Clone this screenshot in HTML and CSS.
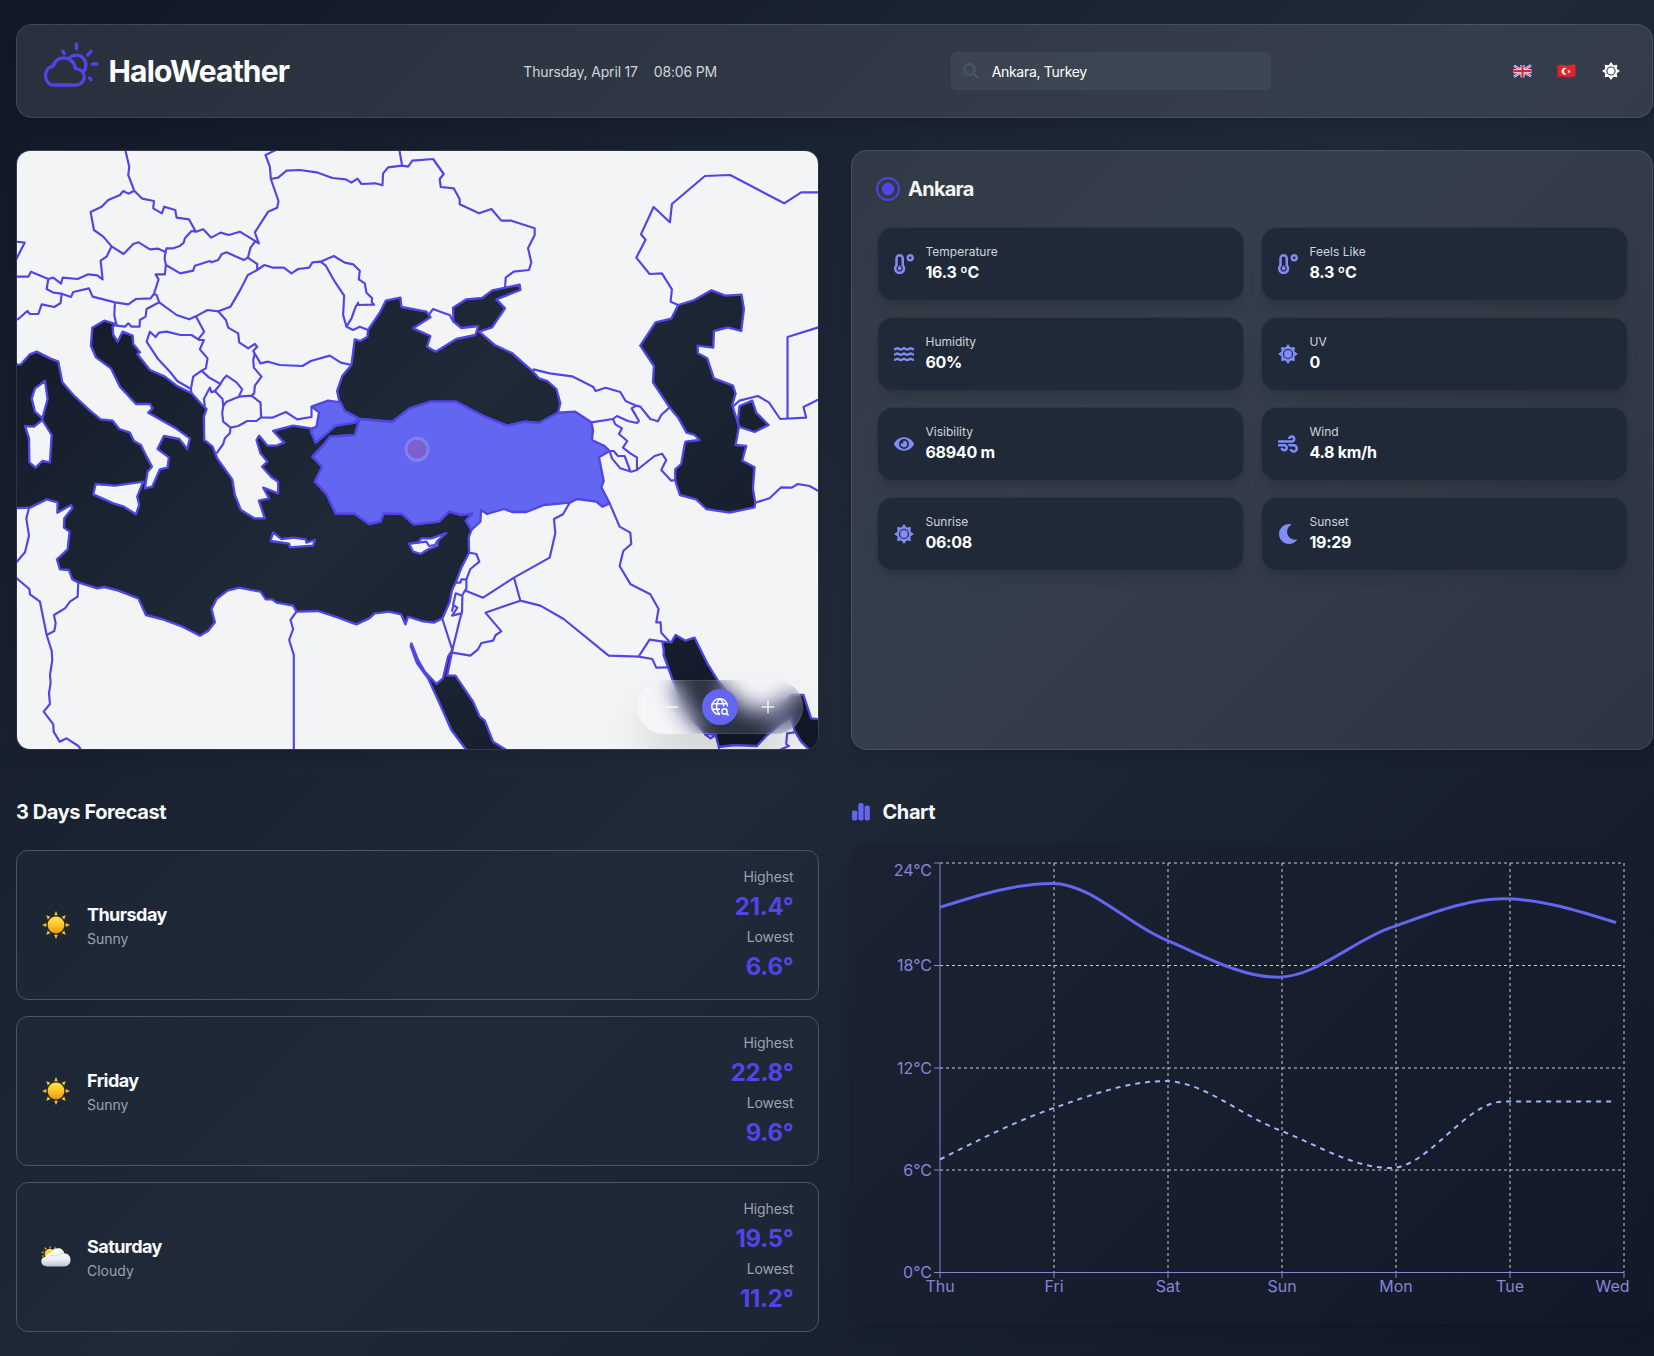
FILE: index.html
```html
<!DOCTYPE html>
<html lang="en">
<head>
<meta charset="utf-8">
<title>HaloWeather</title>
<link rel="stylesheet" href="styles.css">
</head>
<body>
<svg class="defs" width="0" height="0" aria-hidden="true">
  <symbol id="i-sun" viewBox="0 0 20 20">
    <path fill-rule="evenodd" d="M10 0L12.6 3.6L17 3L16.4 7.4L20 10L16.4 12.6L17 17L12.6 16.4L10 20L7.4 16.4L3 17L3.6 12.6L0 10L3.6 7.4L3 3L7.4 3.6ZM10 4.9a5.1 5.1 0 1 0 0 10.2a5.1 5.1 0 0 0 0-10.2Z"/>
    <circle cx="10" cy="10" r="3.9"/>
  </symbol>
  <symbol id="i-temp" viewBox="0 0 512 512">
    <path d="M416 0c-52.9 0-96 43.1-96 96s43.1 96 96 96 96-43.1 96-96-43.1-96-96-96zm0 128c-17.7 0-32-14.3-32-32s14.3-32 32-32 32 14.3 32 32-14.3 32-32 32zm-160-16C256 50.1 205.9 0 144 0S32 50.1 32 112v166.5C12.3 303.2 0 334 0 368c0 79.5 64.5 144 144 144s144-64.5 144-144c0-34-12.3-64.9-32-89.5V112zM144 448c-44.1 0-80-35.9-80-80 0-25.5 12.2-48.9 32-63.8V112c0-26.5 21.5-48 48-48s48 21.5 48 48v192.2c19.8 14.8 32 38.3 32 63.8 0 44.1-35.9 80-80 80zm16-125.1V304c0-8.8-7.2-16-16-16s-16 7.2-16 16v18.9c-18.6 6.6-32 24.2-32 45.1 0 26.5 21.5 48 48 48s48-21.5 48-48c0-20.9-13.4-38.5-32-45.1z"/>
  </symbol>
  <symbol id="i-water" viewBox="0 0 20 20">
    <g fill="none" stroke="currentColor" stroke-width="2.4">
      <path id="wave" d="M0 5.400C1.900 5.200 2.600 4.200 3.500 4.200S5 5.400 6.700 5.400S9 4.200 10 4.200S11.600 5.400 13.300 5.400S15.600 4.200 16.500 4.200S18.100 5.200 20 5.400"/>
      <use href="#wave" y="5.3"/><use href="#wave" y="10.6"/>
    </g>
  </symbol>
  <symbol id="i-eye" viewBox="0 0 576 512">
    <path d="M572.52 241.4C518.29 135.59 410.93 64 288 64S57.68 135.64 3.48 241.41a32.35 32.35 0 0 0 0 29.19C57.71 376.41 165.07 448 288 448s230.32-71.64 284.52-177.41a32.35 32.35 0 0 0 0-29.19zM288 400a144 144 0 1 1 144-144 143.93 143.93 0 0 1-144 144zm0-240a95.31 95.31 0 0 0-25.31 3.79 47.85 47.85 0 0 1-66.9 66.9A95.78 95.78 0 1 0 288 160z"/>
  </symbol>
  <symbol id="i-wind" viewBox="0 0 512 512">
    <path d="M156.7 256H16c-8.8 0-16 7.2-16 16v32c0 8.8 7.2 16 16 16h142.2c15.9 0 30.8 10.9 33.4 26.6 3.3 20-12.1 37.4-31.6 37.4-14.1 0-26.1-9.2-30.4-21.9-2.1-6.3-8.6-10.1-15.2-10.1H81.6c-9.8 0-17.7 8.8-15.9 18.4 8.6 44.1 47.6 77.6 94.2 77.6 57.1 0 102.7-50.1 95.2-108.6C249 291 205.4 256 156.7 256zM16 224h336c59.7 0 106.8-54.8 93.8-116.7-7.6-36.2-36.9-65.5-73.1-73.1-55.4-11.6-105.1 24.9-114.9 75.5-1.9 9.6 6.1 18.3 15.8 18.3h32.8c6.7 0 13.1-3.8 15.2-10.1C325.9 105.2 337.9 96 352 96c19.4 0 34.9 17.4 31.6 37.4-2.6 15.7-17.4 26.6-33.4 26.6H16c-8.8 0-16 7.2-16 16v32c0 8.8 7.2 16 16 16zm384 32H243.7c19.3 16.6 33.2 38.8 39.8 64H400c26.5 0 48 21.5 48 48s-21.5 48-48 48c-17.9 0-33.3-9.9-41.6-24.4-2.9-5-8.7-7.6-14.5-7.6h-33.8c-10.9 0-19 10.8-15.3 21.1 17.8 50.6 70.5 84.8 129.4 72.3 41.2-8.7 75.1-41.6 84.7-82.7C526 321.5 470.5 256 400 256z"/>
  </symbol>
  <symbol id="i-moon" viewBox="0 0 512 512">
    <path d="M283.211 512c78.962 0 151.079-35.925 198.857-94.792 7.068-8.708-.639-21.43-11.562-19.35-124.203 23.654-238.262-71.576-238.262-196.954 0-72.222 38.662-138.635 101.498-174.394 9.686-5.512 7.25-20.197-3.756-22.23A258.156 258.156 0 0 0 283.211 0c-141.309 0-256 114.511-256 256 0 141.309 114.511 256 256 256z"/>
  </symbol>
  <linearGradient id="gold" x1="0" y1="0" x2="0" y2="1">
    <stop offset="0" stop-color="#ffe640"/><stop offset=".45" stop-color="#fdc92a"/><stop offset="1" stop-color="#ef9412"/>
  </linearGradient>
  <linearGradient id="puff" x1="0" y1="0" x2="0" y2="1">
    <stop offset="0" stop-color="#ffffff"/><stop offset=".6" stop-color="#eef1f5"/><stop offset="1" stop-color="#b9c4d0"/>
  </linearGradient>
  <symbol id="e-sun" viewBox="0 0 28 28">
    <g fill="#f9bf2c">
      <path id="ray" d="M12.100 4.300L14 .100L15.900 4.300Z"/>
      <use href="#ray" transform="rotate(45 14 14)"/><use href="#ray" transform="rotate(90 14 14)"/>
      <use href="#ray" transform="rotate(135 14 14)"/><use href="#ray" transform="rotate(180 14 14)"/>
      <use href="#ray" transform="rotate(225 14 14)"/><use href="#ray" transform="rotate(270 14 14)"/>
      <use href="#ray" transform="rotate(315 14 14)"/>
    </g>
    <circle cx="14" cy="14" r="8.400" fill="url(#gold)"/>
  </symbol>
  <symbol id="e-cloud" viewBox="0 0 30 24">
    <g fill="#f2a51c">
      <path d="M8.2 3.3L9 .5L10 3.3ZM4 4.8L3.4 2L6 3.4ZM12.5 3.5L14.6 1.5L14.3 4.3ZM2.8 8.2L0 7.6L2.8 6.2ZM3 11.5L.8 12L2 9.6Z"/>
    </g>
    <circle cx="8.8" cy="9" r="5.2" fill="url(#gold)"/>
    <path fill="url(#puff)" d="M6.5 21.5C2.5 21.5 .3 19.3 .3 16.3C.3 13.6 2.2 12 4.6 11.8C5 9 7.2 7.6 10 8C11.4 4.6 14 3.2 17 3.2C20.4 3.2 22.8 5.3 23.2 8.2C26.8 8.2 29.5 11 29.5 14.8C29.5 18.8 26.9 21.5 23 21.5Z"/>
    <path fill="none" stroke="#c9d1da" stroke-width=".8" d="M9 11.5C11 9.8 13.5 10 15 11.5C16.5 9.5 19.5 8.2 23 8.4"/>
  </symbol>
</svg>

<div class="app">
  <header class="glass header">
    <div class="brand">
      <svg class="brand-icon" viewBox="0 0 58 46" fill="none" stroke="currentColor" stroke-width="3.3" stroke-linecap="round" stroke-linejoin="round">
        <path d="M12 43H34.5C39.5 43 43.2 39.6 43.2 34.8C43.2 30.2 39.8 27 34.4 26.6C33.6 20 28.6 15.800 22.800 15.800C17.600 15.800 13.800 19 12.200 24C7.600 24.800 4.600 28.500 4.600 33.800C4.600 39 7.600 43 12 43Z"/>
        <path d="M28.600 15.900C30.500 14 33 13.200 35.600 13.200C40.800 13.200 44.900 17.600 44.900 23.100C44.900 26 43.800 28.500 42 30.200"/>
        <path d="M35.500 2V6.800M21.800 9.200L23.300 11.700M50 9.200L46.700 13.200M51.500 22H56M48.500 36L50 37.800"/>
      </svg>
      <h1>HaloWeather</h1>
    </div>
    <div class="clock"><span>Thursday, April 17</span><span>08:06 PM</span></div>
    <div class="search">
      <svg viewBox="0 0 16 16" width="16" height="16" fill="none" stroke="currentColor" stroke-width="2.200" stroke-linecap="round"><circle cx="6.500" cy="6.500" r="5.300"/><path d="M10.600 10.600L14.800 14.800"/></svg>
      <span>Ankara, Turkey</span>
    </div>
    <div class="actions">
      <svg class="flag" viewBox="0 0 19 14">
        <path fill="#23408f" d="M.5 1.500C4-.300 8 2 11 1.300S17 .300 18.500 1V12.500C15 12 12.500 13.600 9.500 13.200S3.500 12 .5 13.200Z"/>
        <path stroke="#f1f1f4" stroke-width="2.400" d="M1 1.800L18 12.300M18 1.300L1 12.800"/>
        <path stroke="#d5283a" stroke-width=".900" d="M1 1.800L18 12.300M18 1.300L1 12.800"/>
        <path stroke="#f1f1f4" stroke-width="4" d="M9.500 1V13.200M.5 7.200H18.500"/>
        <path stroke="#d5283a" stroke-width="2.200" d="M9.500 1V13.200M.5 7.200H18.500"/>
      </svg>
      <svg class="flag" viewBox="0 0 19 14">
        <path fill="#e3222f" d="M.5 1.500C4-.300 8 2 11 1.300S17 .300 18.500 1V12.500C15 12 12.500 13.600 9.500 13.200S3.500 12 .5 13.200Z"/>
        <path fill="#fff" d="M9.800 4.500A3.300 3.300 0 1 0 9.800 9.900A2.600 2.600 0 1 1 9.800 4.500ZM12 5.500L12.500 6.700L13.800 6.800L12.800 7.600L13.100 8.900L12 8.200L10.900 8.900L11.200 7.600L10.200 6.800L11.500 6.700Z"/>
      </svg>
      <svg class="theme"><use href="#i-sun"/></svg>
    </div>
  </header>

  <main class="grid">
    <section class="map">
      <svg class="map-canvas" viewBox="21 18 2403 1794" preserveAspectRatio="none">
        <g stroke="#4f46e5" stroke-width="7" stroke-linejoin="round">
        <path fill="#f3f4f6" fill-rule="evenodd" d="M-20-20H2460V1860H-20Z
          M990 775L982 738L998 692L1025 660L1035 583L1052 588L1073 575L1075 555L1110 503L1128 467L1172 458L1175 486L1250 500L1262 517L1210 550L1262 573L1252 605L1278 620L1340 582L1397 570L1406 543L1355 549L1331 530L1330 488L1370 463L1417 459L1448 436L1530 419L1532 435L1460 463L1486 490L1447 547L1408 560L1455 600L1508 625L1570 680L1588 700L1613 708L1640 732L1652 775L1645 803L1588 834L1545 830L1492 842L1425 815L1340 770L1262 770L1200 790L1147 831L1050 822L1005 798Z
          M10 660L33 658L60 628L80 620L120 640L145 650L157 712L190 750L240 797L272 823L308 827L328 852L360 863L372 888L393 900L410 935L426 965L413 980L405 1030L427 1025L450 973L473 968L477 937L443 912L462 873L508 882L532 912L540 880L495 848L415 803L428 790L420 777L378 777L330 725L303 670L258 637L243 603L247 548L283 527L320 538L308 545L310 570L323 590L338 560L368 572L370 597L390 622L382 627L420 675L465 695L500 722L545 745L575 778L590 792L582 815L583 885L608 905L622 940L667 1003L675 1050L693 1095L733 1120L765 1120L747 1067L778 1060L760 1028L805 1045V1010L785 997L757 965L773 950L752 925L740 885L748 872L773 902L800 902L823 893L790 858L850 842L903 850L903 860L918 893L978 842L1035 833L1048 822L1035 870L960 875L943 898L908 935L937 965L915 1010L950 1047L978 1106L1033 1105L1078 1137L1112 1130L1122 1105L1177 1107L1212 1138L1287 1130L1318 1100L1355 1110L1388 1105L1368 1127L1385 1155L1377 1177L1378 1223L1355 1268L1338 1312L1327 1335L1320 1370L1305 1405L1298 1420L1272 1433L1235 1428L1195 1415L1187 1438L1174 1408L1138 1400L1095 1405L1078 1420L1040 1438L985 1418L925 1398L860 1400L850 1382L800 1373L787 1363L768 1363L752 1340L687 1328L653 1337L620 1362L605 1392L615 1432L595 1457L570 1472L518 1445L455 1422L408 1410L385 1360L325 1337L283 1326L262 1330L205 1312L187 1303L177 1275L150 1273L141 1243L173 1213L179 1160L162 1148L163 1120L187 1090L184 1080L142 1103L143 1072L110 1063L60 1088L10 1090Z
          M105 708L113 762L97 820L75 800L65 760L75 730Z
          M45 843L72 845L97 825L125 870L120 952L97 948L77 968L58 952L57 880Z
          M257 1017L315 1022L400 1010L382 1055L388 1080L378 1108L342 1085L310 1075L250 1048Z
          M790 1162L815 1182L852 1178L888 1183L890 1193L915 1185L910 1202L840 1207L838 1196L782 1188Z
          M1198 1196L1225 1192L1235 1180L1265 1180L1310 1164L1284 1187L1283 1203L1257 1212L1233 1227L1210 1220Z
          M2006 480L2050 467L2106 436L2147 452L2196 449L2203 492L2195 558L2155 547L2113 558L2111 608L2064 602L2065 625L2093 640L2113 700L2170 722L2178 745L2168 780L2183 828L2188 845L2178 900L2210 903L2198 947L2235 967L2230 1030L2237 1073L2235 1087L2160 1103L2090 1092L2060 1063L2011 1050L1997 1007V973L2015 957L2025 900L2028 890L2070 885L2055 870L2031 863L2007 820L1980 787L1930 712L1933 663L1892 602L1938 532L1985 521Z
          M2185 828L2190 783L2228 767L2240 803L2277 840L2235 861L2188 845Z
          M1958 1490L1985 1492L1998 1470L2028 1487L2055 1478L2093 1555L2125 1607L2165 1655L2215 1695L2290 1700L2345 1650L2382 1650L2405 1720L2440 1724V1830L2400 1815L2375 1790L2355 1757L2345 1715L2315 1735L2273 1770L2242 1803L2175 1800L2128 1806L2118 1770L2085 1765L2045 1720L2020 1680L1990 1607L1962 1530L1963 1520Z
          M1205 1495L1225 1545L1245 1580L1280 1617L1300 1600L1315 1535L1328 1515L1312 1592L1337 1592L1390 1670L1410 1715L1425 1727L1436 1755L1450 1790L1490 1815L1490 1840H1385L1370 1815L1325 1755L1285 1665L1255 1600L1222 1555L1203 1503Z"/>
        <g fill="#6366f1">
          <path d="M1050 822L1147 831L1200 790L1262 770L1340 770L1425 815L1492 842L1545 830L1588 834L1645 803L1697 800L1745 832L1750 855L1747 885L1785 903L1800 918L1768 937L1782 1008L1775 1027L1800 1075L1778 1085L1760 1070L1703 1062L1680 1073L1603 1080L1550 1101L1507 1101L1483 1092L1432 1107L1414 1095L1412 1130L1385 1155L1368 1127L1388 1105L1355 1110L1318 1100L1287 1130L1212 1138L1177 1107L1122 1105L1112 1130L1078 1137L1033 1105L978 1106L950 1047L915 1010L937 965L908 935L943 898L960 875L1035 870Z"/>
          <path d="M905 785L955 767L992 772L1005 798L1045 820L1035 833L978 842L918 893L903 860L908 850L920 845L928 802Z"/>
        </g>
        <g fill="none" stroke-width="6.500">
          <path d="M345 10L358 65L355 90L373 137L355 146L340 138L330 150L295 165L275 185L242 201L252 255L280 275L305 304L341 327L370 297L386 292L420 313L445 311L467 321L470 310H490L510 303L522 292L525 280L545 258L558 260L537 223L500 218L496 195L463 185L456 205L430 190L432 168L397 161L373 137"/>
          <path d="M558 260L580 253L604 278L632 263L657 270L690 260L747 295L735 262L775 200L802 188L806 168L783 102L780 65L767 30L800 14"/>
          <path d="M783 102L805 98L830 77L870 75L920 82L968 99L1008 103L1025 113L1043 101L1055 117L1097 115L1118 121L1120 85L1135 67L1177 62L1195 65L1208 47L1270 42L1302 87L1290 102L1293 126L1332 130L1350 163V178L1408 205L1445 192L1475 227H1505L1575 250V270L1555 310L1565 352L1558 375L1512 380L1488 398L1486 430M1177 62L1168 10M1262 517L1258 508L1270 492L1300 503L1320 510L1331 530"/>
          <path d="M737 288L722 308L714 338L742 357V375L714 390L690 437L662 485L625 499"/>
          <path d="M467 321L464 340L468 360L511 385L550 377L555 362L600 348L605 352L625 345L635 328L650 322L702 345L714 338"/>
          <path d="M742 375L764 360L790 368H822L845 385L865 372L898 368L908 352L932 350L972 333L1005 353L1030 358L1050 377L1047 403L1065 415L1070 443L1087 460L1086 472L1093 479L1045 480V473L1037 487L1025 520L1010 545L1000 510L1003 452L975 410L948 362L932 350M1010 545L1030 555L1050 545L1075 555"/>
          <path d="M305 304L290 335L272 347L278 403L262 391L235 388L203 402L158 398L153 416L130 398L115 402L63 380L55 395H10M115 402L110 432L130 443L155 446L152 474L133 486L95 478L85 507H60L52 498L25 522L10 526"/>
          <path d="M155 446L183 456L190 441L237 430L248 455L315 472L355 478L378 462L422 460L432 447L446 403L437 388H465L468 360M432 447L440 450L448 472L410 492L407 515L390 525L389 545H365L355 535L345 545L320 542L313 510L315 472"/>
          <path d="M448 472L500 510L538 523L558 514L593 495L625 499L648 525L655 548L685 565L688 592L715 610L735 597L742 605L730 618L752 655L775 650L810 660L878 663L903 648L960 632L993 653L1025 660"/>
          <path d="M558 514L583 560L565 583L545 570H512L470 560L447 563L437 576L420 560L410 590L445 643L480 680L502 708L543 732L550 695L575 677L588 670L593 640L570 613L582 585H565M543 732L545 745"/>
          <path d="M575 677L597 697L632 717L640 703L650 692L680 712L697 733L687 755L650 770L640 783L638 762L615 738L632 717M615 738L605 742L600 728L582 762L585 785"/>
          <path d="M735 625L730 645L732 668L755 695L735 722L733 745L725 752L687 755M725 752L752 773L754 817L787 818L828 801L862 823L905 816V785"/>
          <path d="M640 783L637 805L640 830L662 848L685 843L712 828H740L754 817M662 848L660 865L645 880L640 897L620 925M10 289L44 293L12 356"/>
          <path d="M2006 480L1983 470L1987 433L1957 385L1920 387L1880 338L1908 284L1894 268L1932 186L1981 232L1987 177L2086 93L2162 90L2324 175L2375 142H2440"/>
          <path d="M1570 680L1572 673L1620 685L1687 694L1750 725L1758 738L1788 728L1832 741L1848 768L1880 782L1892 785L1922 822L1945 829L1955 810L1980 787M1880 782L1866 790L1888 828L1882 834L1855 828L1822 813L1810 822L1745 832"/>
          <path d="M1810 822L1817 838L1837 850L1828 867L1853 888L1840 908L1862 925L1882 937V975L1935 933L1957 926L1970 945L1955 975L1985 1007L1997 1005M1800 918L1807 940L1832 970L1865 980L1882 975M1800 918H1812L1825 933H1845L1862 978"/>
          <path d="M2170 785L2190 767L2245 753L2278 772L2312 822L2390 818L2382 786L2440 757M2334 818V576L2440 543M2237 1073L2280 1060L2315 1027L2347 1028L2365 1017L2400 1023L2440 1045"/>
          <path d="M1800 1075L1830 1145L1862 1163L1865 1197L1841 1218L1830 1263L1863 1318L1922 1348L1947 1392L1940 1432H1953L1955 1463L1980 1490"/>
          <path d="M1680 1073L1660 1108L1633 1122L1637 1165L1620 1238L1513 1298L1420 1358L1368 1337M1513 1298L1532 1367L1592 1382L1662 1422L1797 1532L1887 1535L1928 1542L1940 1568L1975 1567M1887 1535L1920 1484L1960 1490"/>
          <path d="M1532 1367L1427 1403L1475 1459L1458 1470L1450 1487L1415 1494L1405 1513L1382 1532L1328 1523"/>
          <path d="M1378 1223L1400 1227L1409 1250L1382 1272L1370 1303L1355 1303L1352 1313H1338M1370 1303V1330L1358 1350L1357 1400L1350 1425L1328 1515L1298 1422M1357 1352L1338 1345L1330 1380L1343 1388L1327 1412L1355 1405M1331 1383L1326 1400"/>
          <path d="M1200 1196L1250 1190L1258 1203L1275 1200L1284 1187"/>
          <path d="M860 1400L842 1425L850 1452L838 1485L852 1530V1830M57 1090L49 1120L57 1172L45 1222L12 1260M10 1288L20 1300L58 1332L60 1348L90 1370L110 1470L133 1458L137 1435L132 1410L165 1390L180 1370L203 1355L205 1312M110 1470L125 1517L127 1545L120 1590L122 1613L117 1645L120 1677L101 1700L130 1738L131 1760L149 1790L170 1780L205 1803L220 1824"/>
          <path d="M2355 1762L2333 1765L2330 1797L2338 1803L2310 1815M2085 1767L2103 1780L2118 1770M2128 1806L2130 1830"/>
        </g>
        </g>
        <circle cx="1222" cy="913" r="33" fill="#ef4444" fill-opacity=".2" stroke="#818cf8" stroke-opacity=".75" stroke-width="9"/>
      </svg>
      <div class="map-controls">
        <button class="ctl"><svg viewBox="0 0 16 16" width="16" height="16"><path d="M1.700 8H14.300" stroke="currentColor" stroke-width="1.500"/></svg></button>
        <button class="ctl ctl-main">
          <svg viewBox="0 0 20 20" width="20" height="20" fill="none" stroke="currentColor" stroke-width="1.500">
            <path d="M17.600 9.500A7.900 7.900 0 1 0 10 17.500M10 1.700C5.400 6 5.400 13 10 17.500M10 1.700C12.500 4 13.700 6.500 13.700 9.600M2.500 6.700H17.200M2.500 12.300H10"/>
            <circle cx="14.500" cy="14.400" r="2.600"/><path d="M16.500 16.400L18.600 18.500"/>
          </svg>
        </button>
        <button class="ctl"><svg viewBox="0 0 16 16" width="16" height="16"><path d="M1.700 8H14.300M8 1.700V14.300" stroke="currentColor" stroke-width="1.500"/></svg></button>
      </div>
    </section>

    <section class="glass current">
      <h2 class="place">
        <svg viewBox="0 0 24 24" width="24" height="24"><circle cx="12" cy="12" r="11" fill="none" stroke="currentColor" stroke-width="1.800"/><circle cx="12" cy="12" r="6.200" fill="currentColor"/></svg>
        Ankara
      </h2>
      <div class="stats">
        <div class="stat"><svg><use href="#i-temp"/></svg><div><p>Temperature</p><b>16.3 ºC</b></div></div>
        <div class="stat"><svg><use href="#i-temp"/></svg><div><p>Feels Like</p><b>8.3 ºC</b></div></div>
        <div class="stat"><svg><use href="#i-water"/></svg><div><p>Humidity</p><b>60%</b></div></div>
        <div class="stat"><svg><use href="#i-sun"/></svg><div><p>UV</p><b>0</b></div></div>
        <div class="stat"><svg><use href="#i-eye"/></svg><div><p>Visibility</p><b>68940 m</b></div></div>
        <div class="stat"><svg><use href="#i-wind"/></svg><div><p>Wind</p><b>4.8 km/h</b></div></div>
        <div class="stat"><svg><use href="#i-sun"/></svg><div><p>Sunrise</p><b>06:08</b></div></div>
        <div class="stat"><svg><use href="#i-moon"/></svg><div><p>Sunset</p><b>19:29</b></div></div>
      </div>
    </section>

    <section class="forecast">
      <h2 class="title">3 Days Forecast</h2>
      <div class="days">
        <article class="day">
          <svg class="emoji"><use href="#e-sun"/></svg>
          <div class="day-name"><h3>Thursday</h3><p>Sunny</p></div>
          <div class="temps"><span>Highest</span><b>21.4°</b><span>Lowest</span><b>6.6°</b></div>
        </article>
        <article class="day">
          <svg class="emoji"><use href="#e-sun"/></svg>
          <div class="day-name"><h3>Friday</h3><p>Sunny</p></div>
          <div class="temps"><span>Highest</span><b>22.8°</b><span>Lowest</span><b>9.6°</b></div>
        </article>
        <article class="day">
          <svg class="emoji"><use href="#e-cloud"/></svg>
          <div class="day-name"><h3>Saturday</h3><p>Cloudy</p></div>
          <div class="temps"><span>Highest</span><b>19.5°</b><span>Lowest</span><b>11.2°</b></div>
        </article>
      </div>
    </section>

    <section class="chart">
      <h2 class="title">
        <svg viewBox="0 0 20 20" width="20" height="20" fill="#6366f1"><rect x="1" y="8.500" width="5.300" height="10" rx="1.800"/><rect x="7.300" y="1" width="5.300" height="17.500" rx="1.800"/><rect x="13.600" y="3.500" width="5.300" height="15" rx="1.800"/></svg>
        Chart
      </h2>
      <div class="chart-card">
        <svg class="plot" viewBox="851 842 802 482" width="802" height="482">
          <g stroke="#ccc" stroke-width="1" stroke-dasharray="3 3" fill="none">
            <path d="M940 863H1624M940 965.500H1624M940 1068H1624M940 1170H1624"/>
            <path d="M1054 863V1272M1168 863V1272M1282 863V1272M1396 863V1272M1510 863V1272M1624 863V1272"/>
          </g>
          <g stroke="#8884d8" stroke-width="1" fill="none">
            <path d="M940 863V1278M934 1272.500H1624"/>
            <path d="M934 863H940M934 965.500H940M934 1068H940M934 1170H940M1054 1272V1278M1168 1272V1278M1282 1272V1278M1396 1272V1278M1510 1272V1278M1624 1272V1278"/>
          </g>
          <g class="axis" text-anchor="end">
            <text x="932" y="876">24°C</text><text x="932" y="971">18°C</text><text x="932" y="1074">12°C</text><text x="932" y="1176">6°C</text><text x="932" y="1278">0°C</text>
          </g>
          <g class="axis" text-anchor="middle">
            <text x="940" y="1292">Thu</text><text x="1054" y="1292">Fri</text><text x="1168" y="1292">Sat</text><text x="1282" y="1292">Sun</text><text x="1396" y="1292">Mon</text><text x="1510" y="1292">Tue</text><text x="1612.500" y="1292">Wed</text>
          </g>
          <path fill="none" stroke="#6366f1" stroke-width="3" d="M940 907.300C977.600 895.400 1015.100 883.400 1052.700 883.400C1090.200 883.400 1127.800 924.100 1165.300 939.700C1202.900 955.300 1240.400 977.200 1278 977.200C1315.600 977.200 1353.100 940.800 1390.700 927.700C1428.200 914.600 1465.800 898.800 1503.300 898.800C1540.900 898.800 1578.400 910.700 1616 922.600"/>
          <path fill="none" stroke="#a5b4fc" stroke-width="2" stroke-dasharray="5 5" d="M940 1159.500C977.600 1140.500 1015.100 1121.500 1052.700 1108.400C1090.200 1095.300 1127.800 1081.100 1165.300 1081.100C1202.900 1081.100 1240.400 1115 1278 1129.500C1315.600 1144 1353.100 1168 1390.700 1168C1428.200 1168 1465.800 1101.600 1503.300 1101.600H1616"/>
        </svg>
      </div>
    </section>
  </main>
</div>
</body>
</html>
```
FILE: styles.css
```css
* { box-sizing: border-box; margin: 0; padding: 0; }
body {
  font-family: Inter, "Liberation Sans", sans-serif;
  color: #fff;
  min-height: 1356px;
  overflow: hidden;
  background: linear-gradient(135deg, #111827, #1f2937 50%, #111827);
  -webkit-font-smoothing: antialiased;
}
.defs { display: block; height: 0; }
.app { width: 1637px; margin: 24px 0 0 16px; height: 1332px; }
.glass {
  background: rgba(255, 255, 255, .1);
  border: 1px solid rgba(255, 255, 255, .1);
  border-radius: 16px;
  box-shadow: 0 10px 15px -3px rgba(0, 0, 0, .1), 0 4px 6px -4px rgba(0, 0, 0, .1);
}
.header {
  height: 94px;
  display: flex;
  align-items: center;
  justify-content: space-between;
  padding: 0 24px;
}
.brand { display: flex; align-items: center; width: 249px; gap: 10px; }
.brand-icon { width: 58px; height: 46px; color: #4f46e5; margin: -12px 0 0 -.5px; flex: none; }
.brand h1 { font-size: 30px; font-weight: 700; letter-spacing: -.85px; line-height: 36px; }
.clock { display: flex; gap: 16px; width: 194px; font-size: 14px; letter-spacing: -.18px; color: #d1d5db; white-space: nowrap; }
.search {
  width: 320px; height: 38px;
  display: flex; align-items: center; gap: 13px;
  padding-left: 11px;
  border-radius: 6px;
  background: rgba(75, 85, 99, .4);
  border: 1px solid rgba(75, 85, 99, .15);
  font-size: 14px;
  letter-spacing: -.3px;
}
.search svg { color: #4b5563; }
.actions { display: flex; align-items: center; width: 124px; padding: 0 8px 0 9px; justify-content: space-between; }
.flag { width: 19px; height: 14px; margin-right: 6px; }
.theme { width: 18px; height: 18px; fill: #fff; }

.grid { display: grid; grid-template-columns: 802.500px 802.500px; column-gap: 32px; margin-top: 32px; }
.map, .current { height: 600px; }
.map {
  position: relative;
  overflow: hidden;
  border: 1px solid rgba(255, 255, 255, .1);
  border-radius: 14px;
  background: linear-gradient(135deg, #111827, #1f2937 50%, #111827);
  box-shadow: 0 10px 15px -3px rgba(0, 0, 0, .1);
}
.map-canvas { display: block; width: 100%; height: 100%; }
.map-controls {
  position: absolute; right: 15px; bottom: 15px;
  display: flex; gap: 12px; padding: 8px 16px;
  border-radius: 27px;
  border: 1px solid rgba(255, 255, 255, .1);
  background: rgba(255, 255, 255, .1);
  backdrop-filter: blur(11px);
  box-shadow: 0 25px 50px -12px rgba(0, 0, 0, .25);
}
.ctl {
  width: 36px; height: 36px; border: 0; border-radius: 50%;
  background: none; color: rgba(255, 255, 255, .8);
  display: flex; align-items: center; justify-content: center;
}
.ctl-main { background: #6366f1; color: #fff; }

.current { padding: 23px 25px 0 25px; }
.place { display: flex; align-items: center; gap: 8px; height: 30px; margin-left: -.5px; font-size: 20px; font-weight: 700; letter-spacing: -.75px; color: #f3f4f6; }
.place svg { color: #4f46e5; }
.stats { display: grid; grid-template-columns: 1fr 1fr; gap: 16px 17px; margin: 23px -.500px 0 0; }
.stat {
  height: 74px; display: flex; align-items: center; gap: 12px; padding-left: 16px;
  background: #1f2937;
  border: 1px solid rgba(255, 255, 255, .06);
  border-radius: 16px;
  box-shadow: 0 10px 15px -3px rgba(0, 0, 0, .1), 0 4px 6px -4px rgba(0, 0, 0, .1);
}
.stat svg { width: 20px; height: 20px; fill: #818cf8; color: #818cf8; }
.stat p { font-size: 12px; line-height: 16px; color: #d1d5db; margin-top: -1px; }
.stat b { display: block; font-size: 16px; line-height: 24px; font-weight: 700; letter-spacing: -.28px; }

.title { display: flex; align-items: center; height: 28px; margin-top: 48px; font-size: 20px; font-weight: 700; letter-spacing: -.42px; color: #f9fafb; }
.title svg { margin-right: 12px; }
.days { display: flex; flex-direction: column; gap: 16px; margin-top: 24px; }
.day {
  height: 150px; display: flex; align-items: center; padding: 0 24px;
  border: 1px solid #4b5563; border-radius: 12px;
  background: rgba(31, 41, 55, .5);
}
.emoji { width: 30px; height: 28px; }
.day-name { flex: 1; margin-left: 16px; }
.day-name h3 { font-size: 18px; line-height: 28px; font-weight: 700; letter-spacing: -.55px; color: #f9fafb; }
.day-name p { font-size: 14px; line-height: 20px; color: #9ca3af; }
.temps { display: flex; flex-direction: column; gap: 4px; text-align: right; }
.temps span { font-size: 14px; line-height: 20px; letter-spacing: -.1px; color: #9ca3af; }
.temps b { font-size: 24px; line-height: 32px; font-weight: 700; letter-spacing: -.25px; color: #4f46e5; }

.chart-card {
  height: 482px; margin-top: 16px; border-radius: 16px;
  background: rgba(24, 26, 42, .3);
  box-shadow: 0 10px 15px -3px rgba(0, 0, 0, .1), 0 4px 6px -4px rgba(0, 0, 0, .1);
}
.plot { display: block; }
.axis { font-size: 16px; fill: #8884d8; }
```
